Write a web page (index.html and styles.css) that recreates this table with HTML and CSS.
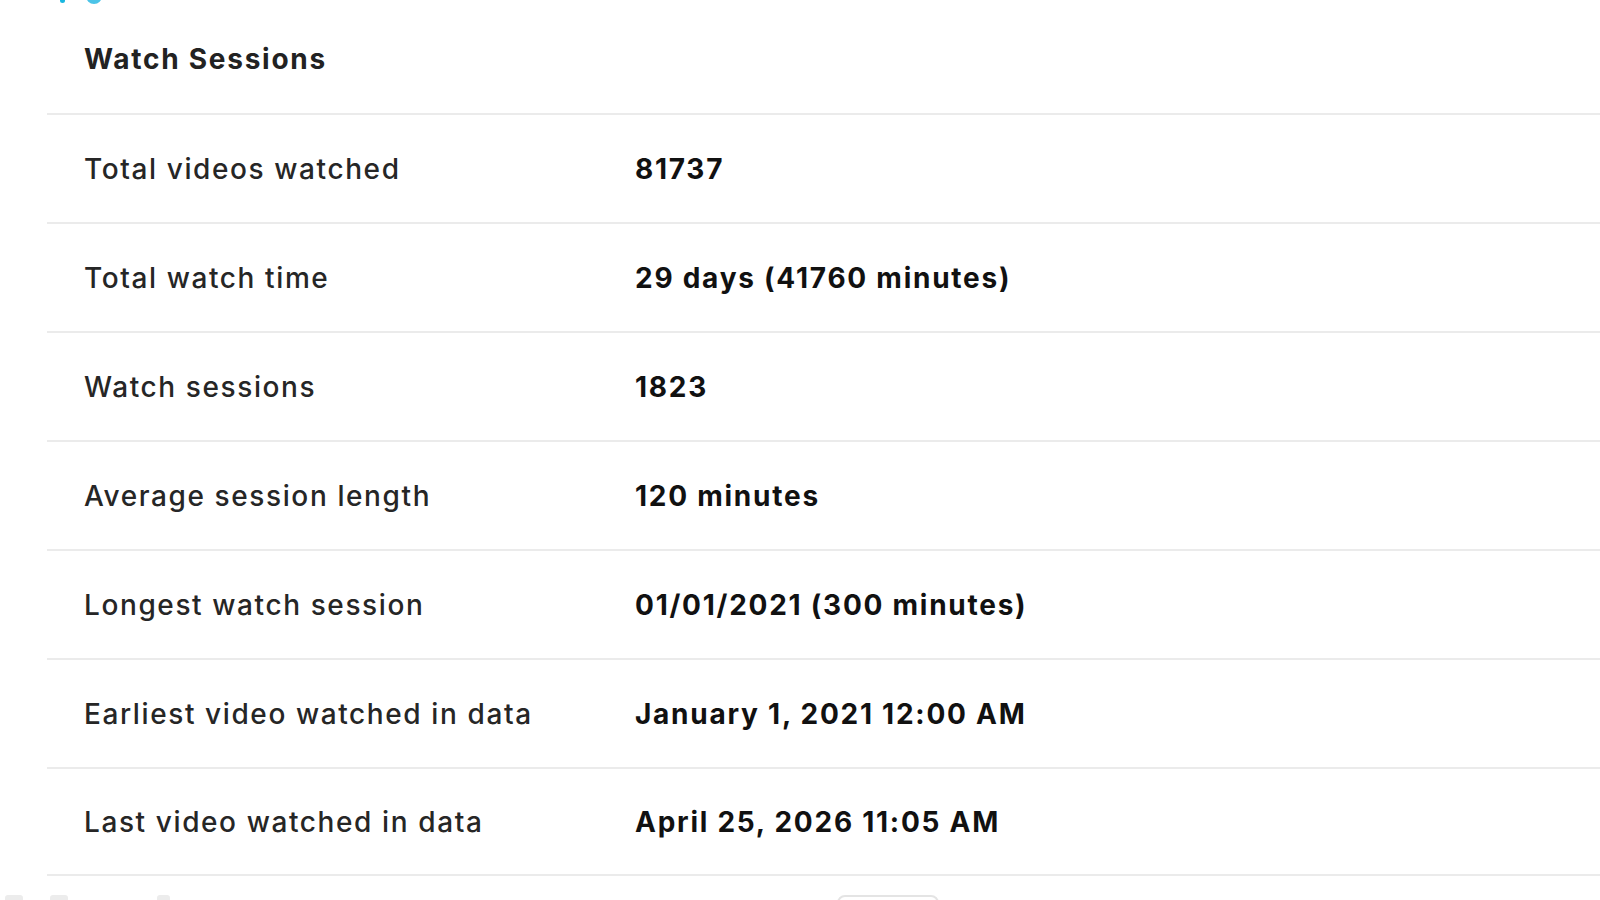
FILE: index.html
```html
<!DOCTYPE html>
<html lang="en">
<head>
    <meta charset="UTF-8">
    <meta name="viewport" content="width=device-width, initial-scale=1.0">
    <title>Watch Sessions</title>
    <link rel="stylesheet" href="styles.css">
</head>
<body>
    <div class="top-icons">
        <span class="dot-small"></span>
        <span class="dot-big"></span>
    </div>

    <section class="stats-card">
        <h2 class="card-title">Watch Sessions</h2>

        <div class="stat-row">
            <span class="stat-label">Total videos watched</span>
            <span class="stat-value">81737</span>
        </div>
        <div class="stat-row">
            <span class="stat-label">Total watch time</span>
            <span class="stat-value">29 days (41760 minutes)</span>
        </div>
        <div class="stat-row">
            <span class="stat-label">Watch sessions</span>
            <span class="stat-value">1823</span>
        </div>
        <div class="stat-row">
            <span class="stat-label">Average session length</span>
            <span class="stat-value">120 minutes</span>
        </div>
        <div class="stat-row">
            <span class="stat-label">Longest watch session</span>
            <span class="stat-value">01/01/2021 (300 minutes)</span>
        </div>
        <div class="stat-row">
            <span class="stat-label">Earliest video watched in data</span>
            <span class="stat-value">January 1, 2021 12:00 AM</span>
        </div>
        <div class="stat-row">
            <span class="stat-label">Last video watched in data</span>
            <span class="stat-value">April 25, 2026 11:05 AM</span>
        </div>
    </section>

    <!-- next section, cut off by the window -->
    <div class="next-section">
        <span class="ghost ghost-a"></span>
        <span class="ghost ghost-b"></span>
        <span class="ghost ghost-c"></span>
        <span class="ghost-button"></span>
    </div>
</body>
</html>
```

FILE: styles.css
```css
body {
    margin: 0;
    background-color: #fff;
    color: #222;
    font-family: Inter, "Noto Sans", Arial, sans-serif;
    letter-spacing: 1.75px;
    overflow: hidden;
}
.top-icons {
    display: flex;
    align-items: flex-start;
    height: 4px;
    padding-left: 60px;
    overflow: hidden;
}
.dot-small {
    display: block;
    width: 5px;
    height: 5px;
    margin-top: -2px;
    border-radius: 50%;
    background-color: #1ab7e0;
}
.dot-big {
    display: block;
    width: 16px;
    height: 16px;
    margin-top: -12px;
    margin-left: 21px;
    border-radius: 50%;
    background-color: #4cc4e8;
}
.stats-card {
    margin-left: 47px;
}
.card-title {
    margin: 0;
    height: 109px;
    display: flex;
    align-items: center;
    padding-left: 37px;
    box-sizing: border-box;
    font-size: 28px;
    font-weight: 700;
    color: #222;
}
.stat-row {
    display: flex;
    align-items: center;
    height: 109px;
    box-sizing: border-box;
    border-top: 2px solid #ebebeb;
    padding-left: 37px;
    font-size: 28px;
}
.stat-row:last-child {
    border-bottom: 2px solid #ebebeb;
}
.stat-label {
    width: 551px;
    flex-shrink: 0;
    font-weight: 500;
    letter-spacing: 1.6px;
    color: #262626;
}
.stat-value {
    font-weight: 700;
    color: #111;
}
.next-section {
    display: flex;
    align-items: flex-start;
    padding-top: 19px;
    padding-left: 5px;
}
.ghost {
    display: block;
    height: 8px;
    border-radius: 3px;
    background-color: #ececec;
}
.ghost-a {
    width: 18px;
}
.ghost-b {
    width: 18px;
    margin-left: 27px;
}
.ghost-c {
    width: 13px;
    margin-left: 89px;
}
.ghost-button {
    display: block;
    width: 98px;
    height: 20px;
    margin-left: 667px;
    border: 2px solid #e4e4e4;
    border-radius: 8px;
}
```
